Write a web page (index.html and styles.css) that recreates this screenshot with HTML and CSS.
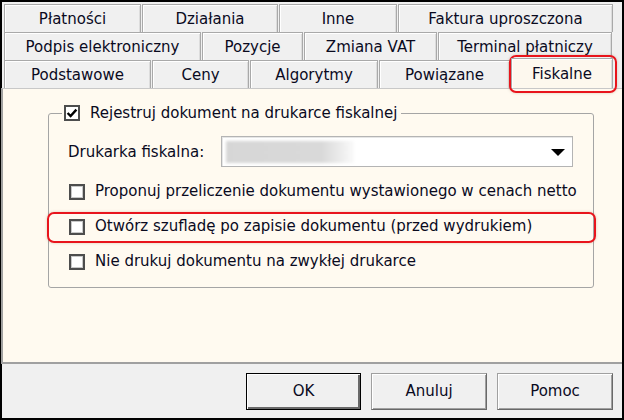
FILE: index.html
```html
<!DOCTYPE html>
<html>
<head>
  <title>Fiskalne</title>
  <link rel="stylesheet" href="styles.css">
</head>
<body>
  <div class="dialog">
    <div class="tabs">
      <div class="tab-row row1">
        <div class="tab">Płatności</div>
        <div class="tab">Działania</div>
        <div class="tab">Inne</div>
        <div class="tab">Faktura uproszczona</div>
      </div>
      <div class="tab-row row2">
        <div class="tab">Podpis elektroniczny</div>
        <div class="tab">Pozycje</div>
        <div class="tab">Zmiana VAT</div>
        <div class="tab">Terminal płatniczy</div>
      </div>
      <div class="tab-row row3">
        <div class="tab">Podstawowe</div>
        <div class="tab">Ceny</div>
        <div class="tab">Algorytmy</div>
        <div class="tab">Powiązane</div>
        <div class="tab active">Fiskalne</div>
      </div>
    </div>

    <div class="panel">
      <fieldset class="group">
        <legend><span class="check checked"><svg viewBox="0 0 12 12" width="12" height="12"><path d="M1.6 6 L4.6 9 L10.4 2.6" fill="none" stroke="#000" stroke-width="2.4"/></svg></span>Rejestruj dokument na drukarce fiskalnej</legend>
        <div class="printer-row">
          <span class="printer-label">Drukarka fiskalna:</span>
          <div class="select">
            <span class="blurred"></span>
            <span class="arrow"></span>
          </div>
        </div>
        <label class="option"><span class="check"></span>Proponuj przeliczenie dokumentu wystawionego w cenach netto</label>
        <label class="option"><span class="check"></span>Otwórz szufladę po zapisie dokumentu (przed wydrukiem)</label>
        <label class="option"><span class="check"></span>Nie drukuj dokumentu na zwykłej drukarce</label>
      </fieldset>
    </div>

    <div class="buttons">
      <button class="default">OK</button>
      <button>Anuluj</button>
      <button>Pomoc</button>
    </div>

    <!-- red highlights drawn over the screenshot -->
    <div class="mark mark-tab"></div>
    <div class="mark mark-option"></div>
  </div>
</body>
</html>
```

FILE: styles.css
```css
html, body {
  margin: 0;
  padding: 0;
}

body {
  font-family: "DejaVu Sans", sans-serif;
  font-size: 15px;
  color: #0a0a1e;
  background: #fff;
}

.dialog {
  position: relative;
  width: 624px;
  height: 420px;
  box-sizing: border-box;
  border: 2px solid #000;
  background: #f0f0f0;
  display: flex;
  flex-direction: column;
}

.tabs {
  padding: 2px 0 0 2px;
}

.tab-row {
  display: grid;
  column-gap: 1px;
  height: 28px;
}

.row1 { grid-template-columns: 137px 136px 118px 215px; }
.row2 { grid-template-columns: 197px 101px 133px 174px; }
.row3 { grid-template-columns: 147px 97px 128px 131px 102px; }

.tab {
  box-sizing: border-box;
  display: flex;
  align-items: center;
  justify-content: center;
  background: #f0f0f0;
  border: 1px solid #a9a9a9;
  border-bottom: none;
  box-shadow: inset 1px 1px 0 #fff, inset -1px 0 0 #dcdcdc;
  white-space: nowrap;
}

.tab.active {
  background: #fdf8ee;
  height: 30px;
  margin-top: -2px;
  position: relative;
  z-index: 1;
}

.panel {
  flex: 1;
  background: #fffaf0;
  border-left: 2px solid #a0a0a0;
  border-bottom: 2px solid #a0a0a0;
  border-top: 1px solid #c8c8c8;
  margin-left: -1px;
  padding: 15px 28px 0 45px;
}

.group {
  margin: 0;
  border: 1px solid #a5a5a5;
  border-radius: 3px;
  padding: 2px 0 15px 19px;
  display: flex;
  flex-direction: column;
  gap: 14px;
}

.group legend {
  display: flex;
  align-items: center;
  padding: 0 4px 0 2px;
  margin-left: -6px;
}

.check {
  box-sizing: border-box;
  display: inline-flex;
  align-items: center;
  justify-content: center;
  width: 16px;
  height: 16px;
  margin-right: 10px;
  background: #fff;
  border: 2px solid #4d4d4d;
  box-shadow: inset 0 0 0 1px #c8c8c8;
  flex: none;
}

.check.checked {
  box-shadow: none;
}

.printer-row {
  display: flex;
  align-items: center;
  margin-top: 12px;
}

.printer-label {
  width: 153px;
}

.select {
  position: relative;
  box-sizing: border-box;
  width: 352px;
  height: 31px;
  background: #fff;
  border: 1px solid #b4b4b4;
  box-shadow: inset 1px 1px 0 #e6e6e6;
}

.blurred {
  position: absolute;
  left: 4px;
  top: 4px;
  width: 128px;
  height: 22px;
  background: linear-gradient(90deg, #d6d6d6 0%, #d9d9d9 75%, #fafafa 100%);
  filter: blur(1.5px);
}

.arrow {
  position: absolute;
  right: 7px;
  top: 12px;
  width: 0;
  height: 0;
  border-left: 7px solid transparent;
  border-right: 7px solid transparent;
  border-top: 7px solid #000;
}

.option {
  display: flex;
  align-items: center;
  margin-left: 1px;
  line-height: 21px;
}

.buttons {
  height: 54px;
  display: flex;
  align-items: center;
  justify-content: flex-end;
  gap: 10px;
  padding-right: 9px;
}

button {
  font: inherit;
  color: inherit;
  width: 116px;
  height: 37px;
  background: #f0f0f0;
  border: 1px solid #a0a0a0;
  border-right-color: #696969;
  border-bottom-color: #696969;
  box-shadow: inset 1px 1px 0 #fff, inset -1px -1px 0 #a0a0a0;
  padding: 0;
}

button.default {
  border: 1px solid #000;
  box-shadow: inset 1px 1px 0 #fff, inset -2px -2px 0 #696969;
  width: 115px;
}

.mark {
  position: absolute;
  border: 2px solid #e8141c;
  border-radius: 7px;
  box-shadow: 0 0 3px rgba(120, 60, 0, 0.25);
  pointer-events: none;
}

.mark-tab {
  left: 507px;
  top: 53px;
  width: 104px;
  height: 34px;
}

.mark-option {
  left: 45px;
  top: 210px;
  width: 545px;
  height: 27px;
}
```
